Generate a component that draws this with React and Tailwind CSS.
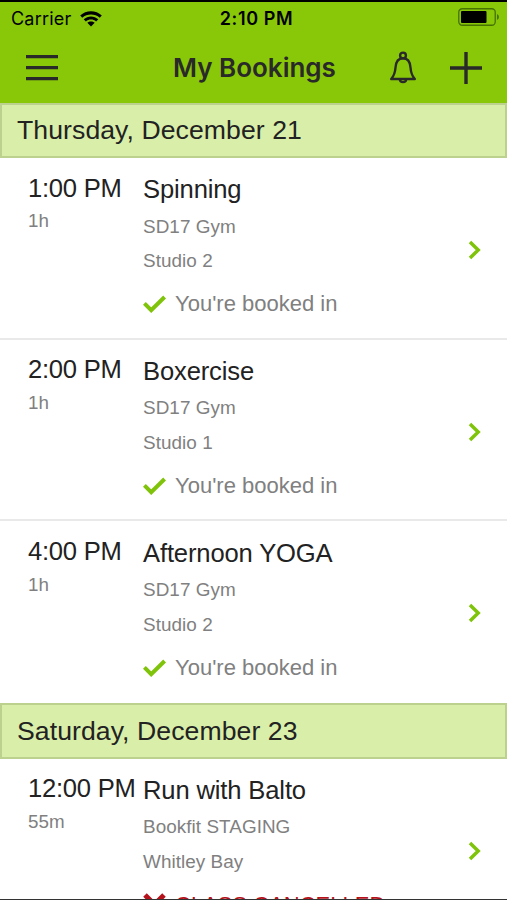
import React from "react";

const days = [
  {
    label: "Thursday, December 21",
    items: [
      { time: "1:00 PM", length: "1h", title: "Spinning", venue: "SD17 Gym", room: "Studio 2", booked: true },
      { time: "2:00 PM", length: "1h", title: "Boxercise", venue: "SD17 Gym", room: "Studio 1", booked: true },
      { time: "4:00 PM", length: "1h", title: "Afternoon YOGA", venue: "SD17 Gym", room: "Studio 2", booked: true },
    ],
  },
  {
    label: "Saturday, December 23",
    items: [
      { time: "12:00 PM", length: "55m", title: "Run with Balto", venue: "Bookfit STAGING", room: "Whitley Bay", booked: false },
    ],
  },
];

function StatusBar() {
  return (
    <div className="grid h-[33px] grid-cols-3 items-center font-['Inter',sans-serif] text-black">
      <div className="flex items-center gap-[9px] pl-[11px]">
        <span className="text-[18px] leading-none tracking-[0.2px]">Carrier</span>
        <svg className="h-4 w-[22px]" viewBox="0 0 22 16">
          <path d="M0.2 4.6C6-1.1 16-1.1 21.8 4.6L19.7 6.7C15 2.4 7 2.4 2.3 6.7Z" />
          <path d="M3.7 8.3C7.8 4.4 14.2 4.4 18.3 8.3L16.1 10.4C13.2 7.8 8.8 7.8 5.9 10.4Z" />
          <path d="M7.3 11.8C9.4 10 12.6 10 14.7 11.8L11 15.5Z" />
        </svg>
      </div>
      <span className="pl-[6px] text-center text-[18px] leading-none font-semibold tracking-[0.65px]">2:10 PM</span>
      <div className="-mt-[3px] flex justify-end pr-[8px]">
        <svg className="h-[18px] w-[41px]" viewBox="0 0 41 18">
          <rect x="0.75" y="0.75" width="36.5" height="16.5" rx="3.5" fill="none" stroke="#467300" strokeWidth="1.3" />
          <rect x="3" y="3" width="25.5" height="12" rx="1" />
          <path d="M39 6Q41 7 41 9T39 12Z" fill="#467300" />
        </svg>
      </div>
    </div>
  );
}

function NavBar() {
  return (
    <div className="-mt-px flex h-[67px] items-center text-[#292929]">
      <svg className="ml-[26px] h-[28px] w-[32px]" viewBox="0 0 32 28" fill="none" stroke="currentColor" strokeWidth="3.2">
        <path d="M0 2.7H32M0 13.7H32M0 24.7H32" />
      </svg>
      <h1 className="ml-[115px] w-[164px] font-['Inter',sans-serif] text-[26px] leading-none font-semibold whitespace-nowrap">
        My Bookings
      </h1>
      <svg className="mt-px ml-[51.5px] h-[34px] w-[28px]" viewBox="0 0 28 34" fill="none" stroke="currentColor" strokeWidth="2.4" strokeLinejoin="round">
        <circle cx="14" cy="4.5" r="2.9" />
        <path d="M14 7.3C8.7 7.3 6.9 11.3 6.5 16.5C6.1 22 4.9 25 2.2 28H25.8C23.1 25 21.9 22 21.5 16.5C21.1 11.3 19.3 7.3 14 7.3Z" />
        <path d="M10.8 28.3C11 32.1 17 32.1 17.2 28.3" />
      </svg>
      <svg className="ml-[33.5px] h-[32px] w-[32px]" viewBox="0 0 32 32" fill="none" stroke="currentColor" strokeWidth="3.4">
        <path d="M0 16H32M16 0V32" />
      </svg>
    </div>
  );
}

function Booking({ item }) {
  return (
    <li className="flex h-[181.7px] border-b-2 border-[#e9e9e9] pl-7 last:border-white">
      <div className="w-[115px] shrink-0 whitespace-nowrap">
        <p className="mt-[14.6px] text-[25.6px] leading-[30px] tracking-[-0.25px] text-[#222]">{item.time}</p>
        <p className="mt-[6.6px] text-[18.8px] leading-6 text-[#808080]">{item.length}</p>
      </div>
      <div className="grow whitespace-nowrap">
        <h2 className="mt-[16.2px] text-[25.6px] leading-[30px] tracking-[-0.15px] text-[#222]">{item.title}</h2>
        <p className="mt-[10.5px] text-[18.9px] leading-6 tracking-[0.05px] text-[#808080]">{item.venue}</p>
        <p className="mt-[10.8px] text-[18.9px] leading-6 tracking-[0.05px] text-[#808080]">{item.room}</p>
        {item.booked ? (
          <p className="mt-[15.8px] flex items-center gap-[9px] text-[22px] leading-[30px] text-[#808080]">
            <svg className="h-[18px] w-[23px]" viewBox="0 0 23 18" fill="none" stroke="#80c30b" strokeWidth="4">
              <path d="M1.4 8.4L8.2 15.2L21.6 2" />
            </svg>
            You're booked in
          </p>
        ) : (
          <p className="mt-[15.5px] flex items-center gap-[9px] text-[22px] leading-[30px] text-[#b5121b]">
            <svg className="h-[23px] w-[23px]" viewBox="0 0 23 23" fill="none" stroke="currentColor" strokeWidth="5">
              <path d="M2 2L21 21M21 2L2 21" />
            </svg>
            CLASS CANCELLED
          </p>
        )}
      </div>
      <svg className="mt-[82px] mr-[26px] h-[20px] w-[13px] shrink-0" viewBox="0 0 13 20" fill="none" stroke="#80c30b" strokeWidth="3.5">
        <path d="M2 2L10.2 10L2 18" />
      </svg>
    </li>
  );
}

export default function App() {
  return (
    <div className="h-[900px] w-[507px] overflow-hidden border-t-2 border-b border-t-black border-b-[#333] bg-white font-['Liberation_Sans',Arial,sans-serif]">
      <header className="h-[100.5px] bg-[#89c709]">
        <StatusBar />
        <NavBar />
      </header>
      <main>
        {days.map((day) => (
          <section key={day.label}>
            <h2 className="flex h-[55.5px] items-center border-2 border-[#bdd18f] bg-[#d9efa9] pl-[15px] text-[26.6px] leading-none tracking-[0.08px] text-[#222]">
              {day.label}
            </h2>
            <ul>
              {day.items.map((item) => (
                <Booking key={item.time} item={item} />
              ))}
            </ul>
          </section>
        ))}
      </main>
    </div>
  );
}
